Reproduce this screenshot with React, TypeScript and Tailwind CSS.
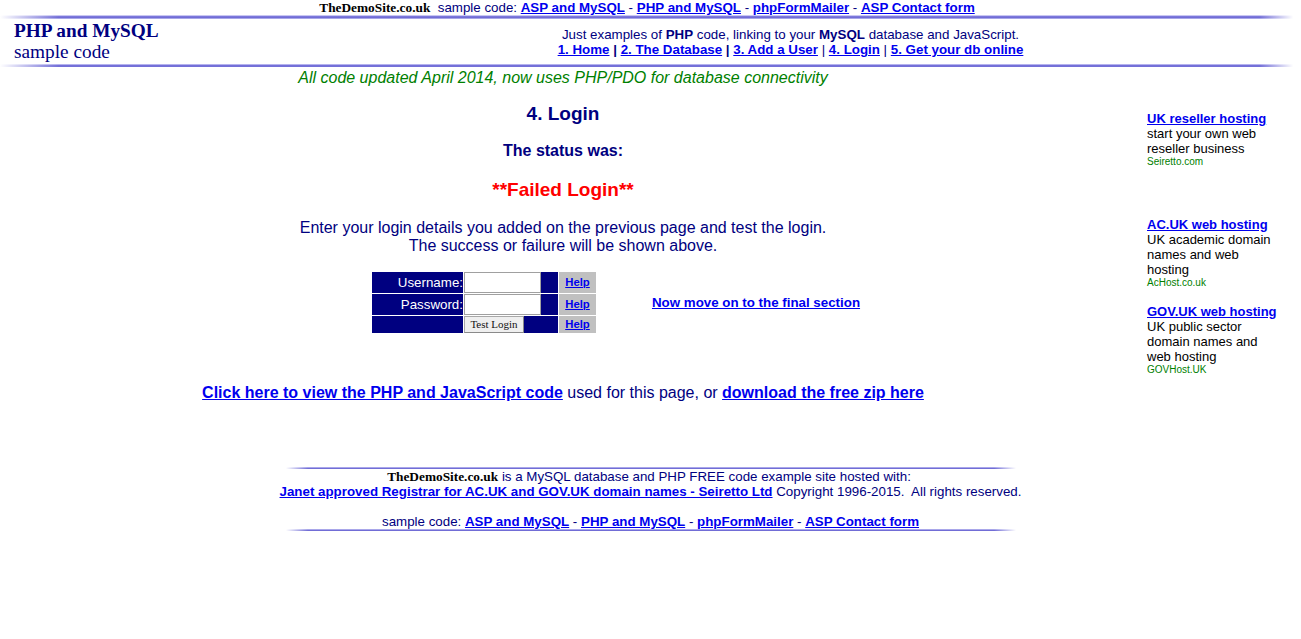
import React from "react";

const ruleTop =
  "h-[4px] w-full bg-[linear-gradient(to_right,#fff,rgba(255,255,255,0)_4.5%,rgba(255,255,255,0)_96.8%,#fff_99.4%),linear-gradient(to_bottom,#c8c6f2_0%,#c8c6f2_25%,#817ddd_25%,#6c68d4_75%,#a8a6e8_75%,#a8a6e8_100%)]";
const ruleMid =
  "h-[3px] w-full bg-[linear-gradient(to_right,#fff,rgba(255,255,255,0)_4.5%,rgba(255,255,255,0)_96.8%,#fff_99.4%),linear-gradient(to_bottom,#b4b2ee_0%,#b4b2ee_33%,#7470d8_33%,#7470d8_100%)]";
const ruleFoot =
  "h-[2px] w-[730px] mx-auto bg-[linear-gradient(to_right,#fff,rgba(255,255,255,0)_3%,rgba(255,255,255,0)_97%,#fff),linear-gradient(to_bottom,#a9a7ea_0%,#a9a7ea_50%,#716dd6_50%,#716dd6_100%)]";

const link = "text-[#0000ee] underline font-bold";

function SampleLinks() {
  return (
    <>
      sample code: <a className={link} href="#">ASP and MySQL</a> -{" "}
      <a className={link} href="#">PHP and MySQL</a> -{" "}
      <a className={link} href="#">phpFormMailer</a> -{" "}
      <a className={link} href="#">ASP Contact form</a>
    </>
  );
}

function Ad({ title, lines, site, className }: { title: string; lines: string; site: string; className?: string }) {
  return (
    <div className={"w-[134px] " + (className ?? "")}>
      <a className={link + " block"} href="#">
        {title}
      </a>
      <div>{lines}</div>
      <div className="text-[10px] leading-[11px] text-[#008000]">{site}</div>
    </div>
  );
}

function HelpCell() {
  return (
    <div className="w-[37px] bg-[#c0c0c0] flex items-center justify-center">
      <a className="text-[11.33px] leading-[13px] font-bold underline text-[#0000ee]" href="#">
        Help
      </a>
    </div>
  );
}

export default function App() {
  return (
    <div className="w-[1301px] min-h-[639px] bg-white font-['Liberation_Sans',Arial,sans-serif] text-[#000080]">
      {/* top bar */}
      <div className="h-[15px] pr-[7px] text-center text-[13.33px] leading-[15px] whitespace-nowrap">
        <span className="font-['Liberation_Serif','Times_New_Roman',serif] font-bold text-black">TheDemoSite.co.uk</span>
        {"\u00a0 "}
        <SampleLinks />
      </div>
      <div className={ruleTop} />

      {/* header */}
      <div className="flex h-[45px]">
        <div className="w-[280px] pl-[14px] pt-[1px] font-['Liberation_Serif','Times_New_Roman',serif] text-[19.3px] leading-[21px] text-[#000080]">
          <div className="font-bold">PHP and MySQL</div>
          <div>sample code</div>
        </div>
        <div className="flex-1 pt-[8px] text-center text-[13.33px] leading-[15px]">
          <div>
            Just examples of <b>PHP</b> code, linking to your <b>MySQL</b> database and JavaScript.
          </div>
          <div>
            <a className={link} href="#">1. Home</a> <b>|</b> <a className={link} href="#">2. The Database</a> <b>|</b>{" "}
            <a className={link} href="#">3. Add a User</a> | <a className={link} href="#">4. Login</a> |{" "}
            <a className={link} href="#">5. Get your db online</a>
          </div>
        </div>
      </div>
      <div className={ruleMid} />

      {/* body */}
      <div className="flex items-start">
        <div className="w-[1126px] text-center">
          <div className="pt-[2px] text-[16px] leading-[18px] italic text-[#008000]">
            All code updated April 2014, now uses PHP/PDO for database connectivity
          </div>
          <h2 className="mt-[16px] text-[19px] leading-[22px] font-bold">4. Login</h2>
          <div className="mt-[17px] text-[16px] leading-[18px] font-bold">The status was:</div>
          <div className="mt-[19px] text-[19px] leading-[22px] font-bold text-[#ff0000]">**Failed Login**</div>
          <div className="mt-[18px] text-[16px] leading-[18px]">
            Enter your login details you added on the previous page and test the login.
            <br />
            The success or failure will be shown above.
          </div>

          <div className="mt-[17px] ml-[348px] flex items-center text-left">
            <div className="w-[272px] flex justify-center">
              <div className="flex flex-col gap-[1px] text-[13.33px]">
                <div className="flex gap-[1px] h-[21px]">
                  <div className="w-[91px] bg-[#000080] text-white text-right leading-[21px]">Username:</div>
                  <div className="w-[94px] bg-[#000080]">
                    <div className="w-[77px] h-[21px] bg-white border border-[#a0a0a0]" />
                  </div>
                  <HelpCell />
                </div>
                <div className="flex gap-[1px] h-[21px]">
                  <div className="w-[91px] bg-[#000080] text-white text-right leading-[21px]">Password:</div>
                  <div className="w-[94px] bg-[#000080]">
                    <div className="w-[77px] h-[21px] bg-white border border-[#a0a0a0]" />
                  </div>
                  <HelpCell />
                </div>
                <div className="flex gap-[1px] h-[17px]">
                  <div className="w-[91px] bg-[#000080]" />
                  <div className="w-[94px] bg-[#000080]">
                    <div className="w-[60px] h-[17px] bg-[#efefef] border border-[#a8a8a8] border-r-[#8a8a8a] border-b-[#8a8a8a] text-center font-['Liberation_Serif','Times_New_Roman',serif] font-normal text-[11px] leading-[15px] text-[#111]">
                      Test Login
                    </div>
                  </div>
                  <HelpCell />
                </div>
              </div>
            </div>
            <div className="w-[272px] text-center pb-[1px]">
              <a className={link + " text-[13.33px]"} href="#">
                Now move on to the final section
              </a>
            </div>
          </div>

          <div className="mt-[51px] text-[16px] leading-[18px]">
            <a className={link} href="#">Click here to view the PHP and JavaScript code</a> used for this page, or{" "}
            <a className={link} href="#">download the free zip here</a>
          </div>
        </div>

        {/* sidebar */}
        <div className="w-[175px] pl-[21px] pt-[44px] text-[13px] leading-[15px] text-black text-left">
          <Ad title="UK reseller hosting" lines="start your own web reseller business" site="Seiretto.com" />
          <Ad className="mt-[50px]" title="AC.UK web hosting" lines="UK academic domain names and web hosting" site="AcHost.co.uk" />
          <Ad className="mt-[16px]" title="GOV.UK web hosting" lines="UK public sector domain names and web hosting" site="GOVHost.UK" />
        </div>
      </div>

      {/* footer */}
      <div className="mt-[65px] w-[760px] mx-auto text-center text-[13.33px] leading-[15px]">
        <div className={ruleFoot} />
        <div className="pr-[3px]">
          <span className="font-['Liberation_Serif','Times_New_Roman',serif] font-bold text-black">TheDemoSite.co.uk</span> is a
          MySQL database and PHP FREE code example site hosted with:
        </div>
        <div className="whitespace-nowrap">
          <a className={link} href="#">Janet approved Registrar for AC.UK and GOV.UK domain names - Seiretto Ltd</a> Copyright
          1996-2015.{"\u00a0 "}All rights reserved.
        </div>
        <div>&nbsp;</div>
        <div>
          <SampleLinks />
        </div>
        <div className={ruleFoot} />
      </div>
    </div>
  );
}
